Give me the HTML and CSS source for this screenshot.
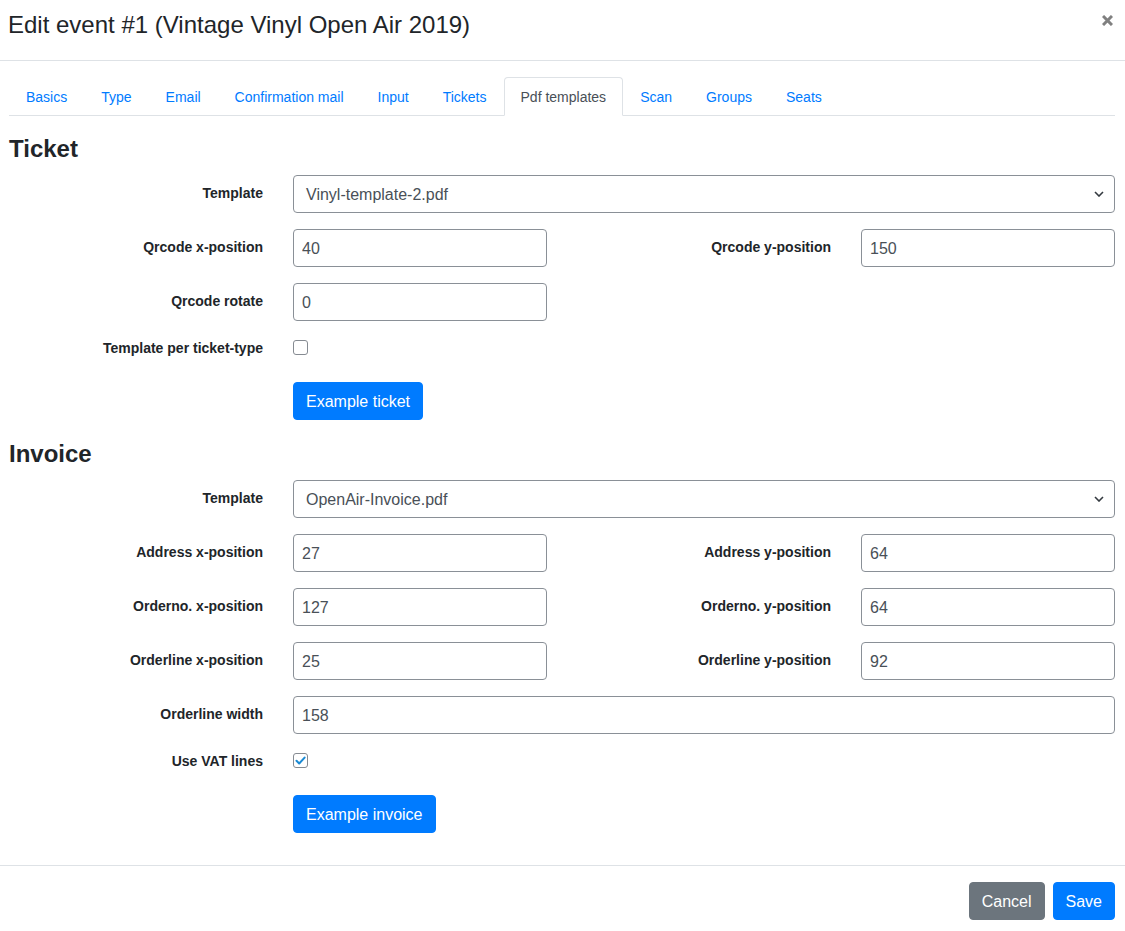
FILE: index.html
```html
<!DOCTYPE html>
<html lang="en">
<head>
<meta charset="utf-8">
<title>Edit event #1</title>
<link rel="stylesheet" href="styles.css">
</head>
<body>
<div class="modal">
  <header class="modal-header">
    <h5 class="modal-title">Edit event #1 (Vintage Vinyl Open Air 2019)</h5>
    <button class="close" type="button" aria-label="Close">
      <svg width="11" height="11" viewBox="0 0 11 11"><path d="M1 1L10 10M10 1L1 10" stroke="#808080" stroke-width="3" fill="none"/></svg>
    </button>
  </header>
  <div class="modal-body">
    <ul class="tabs">
      <li><a class="tab">Basics</a></li>
      <li><a class="tab">Type</a></li>
      <li><a class="tab">Email</a></li>
      <li><a class="tab">Confirmation mail</a></li>
      <li><a class="tab">Input</a></li>
      <li><a class="tab">Tickets</a></li>
      <li><a class="tab active">Pdf templates</a></li>
      <li><a class="tab">Scan</a></li>
      <li><a class="tab">Groups</a></li>
      <li><a class="tab">Seats</a></li>
    </ul>

    <h4 class="section-title">Ticket</h4>
    <div class="form-grid">
      <label class="lbl">Template</label>
      <div class="field span3">
        <div class="select"><span>Vinyl-template-2.pdf</span>
          <svg class="chev" width="10" height="6" viewBox="0 0 10 6"><path d="M1 1L5 5L9 1" stroke="#343a40" stroke-width="1.6" fill="none"/></svg>
        </div>
      </div>

      <label class="lbl">Qrcode x-position</label>
      <div class="field"><input class="input" type="text" value="40"></div>
      <label class="lbl">Qrcode y-position</label>
      <div class="field"><input class="input" type="text" value="150"></div>

      <label class="lbl">Qrcode rotate</label>
      <div class="field"><input class="input" type="text" value="0"></div>
      <div class="spacer span2"></div>

      <label class="lbl lbl-check">Template per ticket-type</label>
      <div class="field span3 check-cell"><span class="checkbox"></span></div>

      <div class="spacer"></div>
      <div class="field span3"><button class="btn btn-primary" type="button">Example ticket</button></div>
    </div>

    <h4 class="section-title">Invoice</h4>
    <div class="form-grid last">
      <label class="lbl">Template</label>
      <div class="field span3">
        <div class="select"><span>OpenAir-Invoice.pdf</span>
          <svg class="chev" width="10" height="6" viewBox="0 0 10 6"><path d="M1 1L5 5L9 1" stroke="#343a40" stroke-width="1.6" fill="none"/></svg>
        </div>
      </div>

      <label class="lbl">Address x-position</label>
      <div class="field"><input class="input" type="text" value="27"></div>
      <label class="lbl">Address y-position</label>
      <div class="field"><input class="input" type="text" value="64"></div>

      <label class="lbl">Orderno. x-position</label>
      <div class="field"><input class="input" type="text" value="127"></div>
      <label class="lbl">Orderno. y-position</label>
      <div class="field"><input class="input" type="text" value="64"></div>

      <label class="lbl">Orderline x-position</label>
      <div class="field"><input class="input" type="text" value="25"></div>
      <label class="lbl">Orderline y-position</label>
      <div class="field"><input class="input" type="text" value="92"></div>

      <label class="lbl">Orderline width</label>
      <div class="field span3"><input class="input" type="text" value="158"></div>

      <label class="lbl lbl-check">Use VAT lines</label>
      <div class="field span3 check-cell">
        <span class="checkbox checked">
          <svg width="13" height="13" viewBox="0 0 13 13"><path d="M2.5 6.8L5.2 9.5L10.6 3.6" stroke="#1a8ad4" stroke-width="2" fill="none" stroke-linecap="round" stroke-linejoin="round"/></svg>
        </span>
      </div>

      <div class="spacer"></div>
      <div class="field span3"><button class="btn btn-primary" type="button">Example invoice</button></div>
    </div>
  </div>
  <footer class="modal-footer">
    <button class="btn btn-secondary" type="button">Cancel</button>
    <button class="btn btn-primary" type="button">Save</button>
  </footer>
</div>
</body>
</html>
```

FILE: styles.css
```css
* { box-sizing: border-box; }

html, body {
  margin: 0;
  padding: 0;
  background: #fff;
}

body {
  font-family: "Liberation Sans", Arial, Helvetica, sans-serif;
  color: #212529;
  font-size: 16px;
  line-height: 1.5;
}

.modal {
  width: 1125px;
  background: #fff;
}

.modal-header {
  display: flex;
  justify-content: space-between;
  align-items: flex-start;
  height: 61px;
  padding: 11px 12px 0 8px;
  border-bottom: 1px solid #dee2e6;
}

.modal-title {
  margin: 0;
  font-size: 24px;
  font-weight: 400;
  line-height: 28.8px;
  color: #212529;
}

.close {
  background: none;
  border: 0;
  padding: 0;
  margin: 4px 0 0 0;
  width: 11px;
  height: 11px;
  display: block;
  cursor: pointer;
}
.close svg { display: block; }

.modal-body {
  padding: 16px 10px 13px 9px;
}

.tabs {
  list-style: none;
  margin: 0 0 18px 0;
  padding: 0;
  display: flex;
  border-bottom: 1px solid #dee2e6;
}

.tabs li { margin-bottom: -1px; }

.tab {
  display: block;
  padding: 9px 16px 7px;
  font-size: 14px;
  line-height: 21px;
  color: #007bff;
  border: 1px solid transparent;
  border-radius: 4px 4px 0 0;
  text-decoration: none;
}

.tab.active {
  color: #495057;
  background: #fff;
  border-color: #dee2e6 #dee2e6 #fff;
}

.section-title {
  margin: 0 0 12px 0;
  font-size: 24px;
  font-weight: 700;
  line-height: 29px;
  color: #212529;
}

.form-grid {
  display: grid;
  grid-template-columns: repeat(4, 1fr);
  column-gap: 30px;
  row-gap: 16px;
  margin-bottom: 19px;
  align-items: start;
}

.span2 { grid-column: span 2; }
.span3 { grid-column: span 3; }

.lbl {
  text-align: right;
  font-size: 14px;
  font-weight: 700;
  line-height: 24px;
  padding-top: 6px;
  color: #212529;
}

.lbl-check { padding-top: 0; margin-top: -1px; }

.check-cell { height: 29px; }

.input,
.select {
  display: block;
  width: 100%;
  height: 38px;
  padding: 7px 12px 5px;
  font-family: inherit;
  font-size: 16px;
  line-height: 24px;
  color: #495057;
  background: #fff;
  border: 1px solid #8a9097;
  border-radius: 4px;
  outline: none;
  margin: 0;
}

.input {
  padding-left: 8px;
}

.select {
  position: relative;
}

.chev {
  position: absolute;
  right: 10px;
  top: 15px;
  display: block;
}

.checkbox {
  display: block;
  width: 15px;
  height: 15px;
  margin-top: 3px;
  border: 1px solid #868b92;
  border-radius: 3px;
  background: #fff;
  position: relative;
}

.checkbox svg {
  display: block;
  margin: 0;
}

.btn {
  display: inline-block;
  font-family: inherit;
  font-size: 16px;
  line-height: 24px;
  padding: 7px 12px 5px;
  border: 1px solid transparent;
  border-radius: 4px;
  color: #fff;
  cursor: pointer;
  font-weight: 400;
}

.btn-primary {
  background: #007bff;
  border-color: #007bff;
}

.btn-secondary {
  background: #6c757d;
  border-color: #6c757d;
}

.modal-footer {
  display: flex;
  justify-content: flex-end;
  gap: 8px;
  padding: 16px 10px 16px 16px;
  border-top: 1px solid #dee2e6;
}
```
